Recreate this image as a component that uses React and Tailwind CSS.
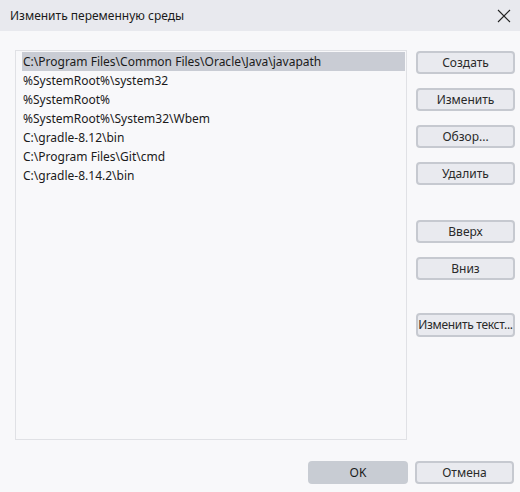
import React from 'react';

const paths = [
  'C:\\Program Files\\Common Files\\Oracle\\Java\\javapath',
  '%SystemRoot%\\system32',
  '%SystemRoot%',
  '%SystemRoot%\\System32\\Wbem',
  'C:\\gradle-8.12\\bin',
  'C:\\Program Files\\Git\\cmd',
  'C:\\gradle-8.14.2\\bin',
];

const Btn = ({ children, className = '' }) => (
  <button
    className={`w-[99px] h-[23px] rounded-[4px] border-2 border-[#c6c9d0] bg-[#e9eaef] text-[12px] text-[#2a2a2a] leading-none flex items-center justify-center ${className}`}
  >
    {children}
  </button>
);

export default function App() {
  return (
    <div
      className="w-[520px] h-[492px] bg-[#f8f8fa] flex flex-col text-[#1a1a1a]"
      style={{ fontFamily: '"Noto Sans", "Open Sans", sans-serif' }}
    >
      {/* Title bar */}
      <div className="h-[31px] bg-[#e8e9ee] flex items-center justify-between pl-[10px] pr-[8px] shrink-0">
        <span className="text-[12px]">Изменить переменную среды</span>
        <svg width="14" height="14" viewBox="0 0 14 14" className="mr-[1px]">
          <path d="M1 1 L13 13 M13 1 L1 13" stroke="#222" strokeWidth="1.1" />
        </svg>
      </div>

      <div className="flex pl-[15px] pt-[19px] gap-[9px]">
        {/* List */}
        <div className="w-[392px] h-[390px] border border-[#e0e1e5] pt-[1px] pl-[6px] pr-[1px]">
          {paths.map((p, i) => (
            <div
              key={i}
              className={`h-[19px] flex items-center pl-[1px] text-[12px] whitespace-nowrap ${
                i === 0 ? 'bg-[#c9ccd4]' : ''
              }`}
            >
              {p}
            </div>
          ))}
        </div>

        {/* Side buttons */}
        <div className="flex flex-col pt-[1px]">
          <Btn>Создать</Btn>
          <Btn className="mt-[14px]">Изменить</Btn>
          <Btn className="mt-[14px]">Обзор...</Btn>
          <Btn className="mt-[14px]">Удалить</Btn>
          <Btn className="mt-[35px]">Вверх</Btn>
          <Btn className="mt-[14px]">Вниз</Btn>
          <Btn className="mt-[33px] h-[24px] tracking-[-0.3px]">Изменить текст...</Btn>
        </div>
      </div>

      {/* Bottom buttons */}
      <div className="flex justify-end gap-[7px] pr-[6px] mt-[21px]">
        <button className="w-[100px] h-[23px] rounded-[4px] bg-[#c8ccd3] text-[12px] flex items-center justify-center">
          OK
        </button>
        <Btn>Отмена</Btn>
      </div>
    </div>
  );
}
